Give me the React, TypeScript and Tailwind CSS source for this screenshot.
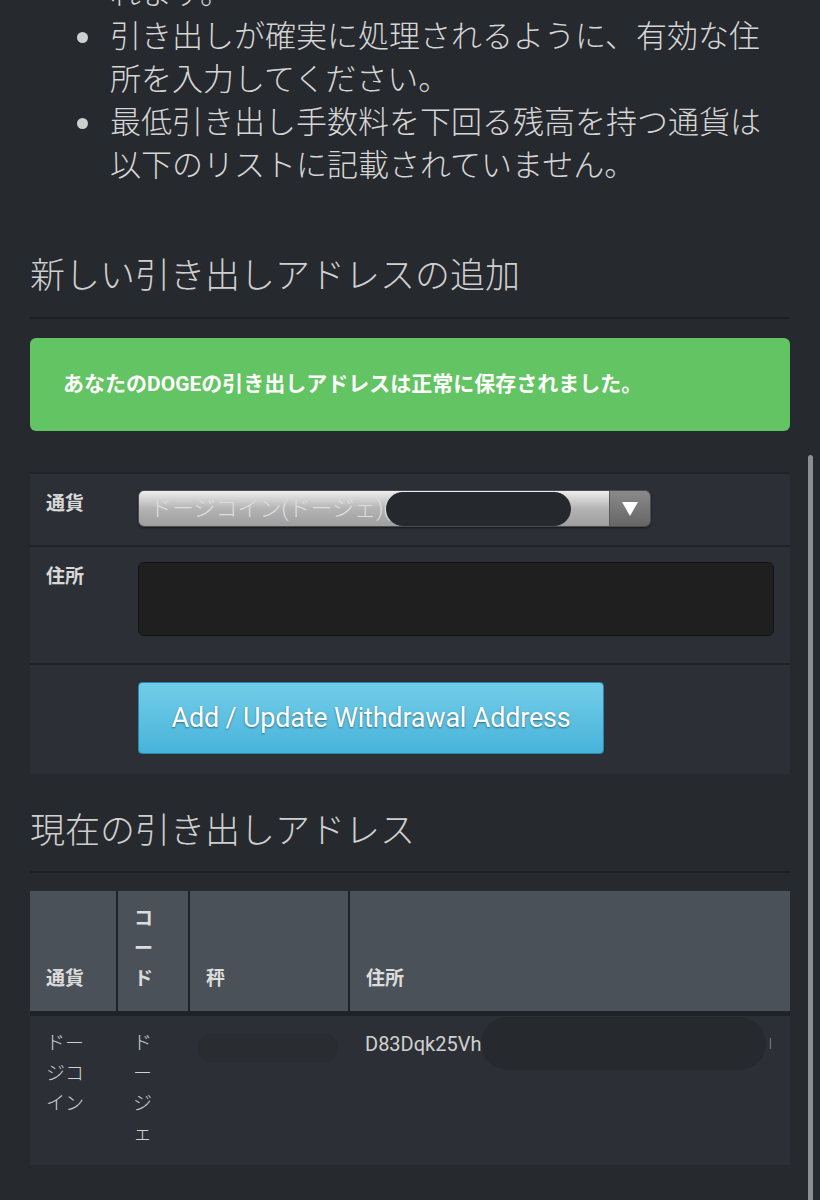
import React from 'react';

const font = { fontFamily: 'Roboto, "Noto Sans CJK JP", sans-serif' };

function Redact({ className }: { className: string }) {
  return <span className={`inline-block shrink-0 rounded-full ${className}`} />;
}

function Note({ children }: { children: React.ReactNode }) {
  return (
    <li className="flex">
      <span className="mt-[17px] ml-[-33px] mr-[22px] h-[11px] w-[11px] shrink-0 rounded-full bg-[#cfcfcf]" />
      <span>{children}</span>
    </li>
  );
}

export default function App() {
  return (
    <div className="relative min-h-[1200px] overflow-hidden bg-[#26292e] text-[#d2d2d2]" style={font}>
      {/* scrollbar */}
      <div className="absolute right-[7px] top-[455px] h-[760px] w-[5px] rounded-full bg-[#8b8e92]" />

      <div className="px-[30px]">
        {/* notes */}
        <div className="-mt-[28px] pl-[80px] text-[31px] font-light leading-[43px] text-[#d6d6d6]">
          れます。
        </div>
        <ul className="pl-[80px] text-[31px] font-light leading-[43px] text-[#d6d6d6]">
          <Note>引き出しが確実に処理されるように、有効な住所を入力してください。</Note>
          <Note>最低引き出し手数料を下回る残高を持つ通貨は以下のリストに記載されていません。</Note>
        </ul>

        {/* add address */}
        <h2 className="mt-[69px] text-[35px] font-light leading-[42px] text-[#cfcfcf]">新しい引き出しアドレスの追加</h2>
        <div className="mt-[19px] border-t-2 border-[#1d1f23]" />

        <div className="mt-[19px] flex h-[93px] items-center rounded-[6px] bg-[#62c462] px-[33px] text-[21px] font-bold text-white">
          あなたのDOGEの引き出しアドレスは正常に保存されました。
        </div>

        <div className="mt-[41px] border-t-2 border-[#1f2226] bg-[#2c3036]">
          <div className="flex h-[73px] border-b-2 border-[#1f2226]">
            <div className="w-[108px] pl-[16px] pt-[16px] text-[19px] font-bold leading-[28px] text-[#d8d8d8]">通貨</div>
            <div className="pt-[16px]">
              <div className="flex h-[37px] w-[513px] overflow-hidden rounded-[6px] border border-[#4a4d51] shadow-[0_1px_2px_rgba(0,0,0,0.5)]">
                <div className="flex flex-1 items-center bg-gradient-to-b from-[#eeeeee] via-[#b4b4b4] to-[#9e9e9e] pl-[11px] text-[22px] font-light text-[#dedede]">
                  <span>ドージコイン(ドージェ)(</span>
                  <Redact className="ml-[-4px] h-[34px] w-[185px] bg-[#25282c]" />
                </div>
                <div className="flex w-[41px] items-center justify-center border-l border-[#5a5a5a] bg-gradient-to-b from-[#8a8a8a] to-[#666666] text-[20px] text-white">
                  <svg width="16" height="14" viewBox="0 0 16 14"><path d="M0 0h16L8 14z" fill="#ffffff" /></svg>
                </div>
              </div>
            </div>
          </div>
          <div className="flex h-[118px] border-b-2 border-[#1f2226]">
            <div className="w-[108px] pl-[16px] pt-[16px] text-[19px] font-bold leading-[28px] text-[#d8d8d8]">住所</div>
            <div className="pt-[15px]">
              <div className="h-[74px] w-[636px] rounded-[6px] border border-[#111214] bg-[#1f1f1f]" />
            </div>
          </div>
          <div className="flex h-[109px]">
            <div className="w-[108px]" />
            <div className="pt-[17px]">
              <button className="h-[72px] w-[466px] rounded-[4px] border border-[#2b86ab] bg-gradient-to-b from-[#72cde8] to-[#47b4db] text-[27px] tracking-[-0.2px] text-white [text-shadow:0_1px_2px_rgba(0,0,0,0.45)]">
                Add / Update Withdrawal Address
              </button>
            </div>
          </div>
        </div>

        {/* current addresses */}
        <h2 className="mt-[37px] text-[35px] font-light leading-[42px] text-[#cfcfcf]">現在の引き出しアドレス</h2>
        <div className="mt-[18px] border-t-2 border-[#1d1f23]" />

        <table className="mt-[18px] w-[760px] table-fixed border-collapse">
          <colgroup>
            <col className="w-[87px]" />
            <col className="w-[72px]" />
            <col className="w-[160px]" />
            <col className="w-[441px]" />
          </colgroup>
          <thead>
            <tr className="h-[122px] bg-[#4a5159] text-[19px] font-bold leading-[30px] text-[#dcdcdc]">
              <th className="border-r-2 border-[#1f2226] pb-[17px] pl-[16px] text-left align-bottom">通貨</th>
              <th className="border-r-2 border-[#1f2226] pb-[17px] pl-[16px] text-left align-bottom">
                <div className="w-[22px]">コード</div>
              </th>
              <th className="border-r-2 border-[#1f2226] pb-[17px] pl-[16px] text-left align-bottom">秤</th>
              <th className="pb-[17px] pl-[16px] text-left align-bottom">住所</th>
            </tr>
          </thead>
          <tbody>
            <tr className="border-t-[5px] border-[#1f2226] bg-[#2c3036] text-[19px] font-light leading-[30px] text-[#d0d0d0]">
              <td className="pb-[16px] pl-[16px] pt-[13px] align-top">
                <div className="w-[42px]">ドージコイン</div>
              </td>
              <td className="pb-[16px] pl-[16px] pt-[13px] align-top">
                <div className="w-[22px]">ドージェ</div>
              </td>
              <td className="pl-[9px] pt-[18px] align-top">
                <Redact className="h-[28px] w-[140px] bg-[#292c31]" />
              </td>
              <td className="pl-[16px] pt-[13px] align-top">
                <div className="flex items-center">
                  <span className="text-[20px] font-normal">D83Dqk25Vh</span>
                  <Redact className="-my-[12px] h-[53px] w-[285px] bg-[#26292d]" />
                  <span className="ml-[2px] text-[14px] text-[#888]">I</span>
                </div>
              </td>
            </tr>
          </tbody>
        </table>
      </div>
    </div>
  );
}
